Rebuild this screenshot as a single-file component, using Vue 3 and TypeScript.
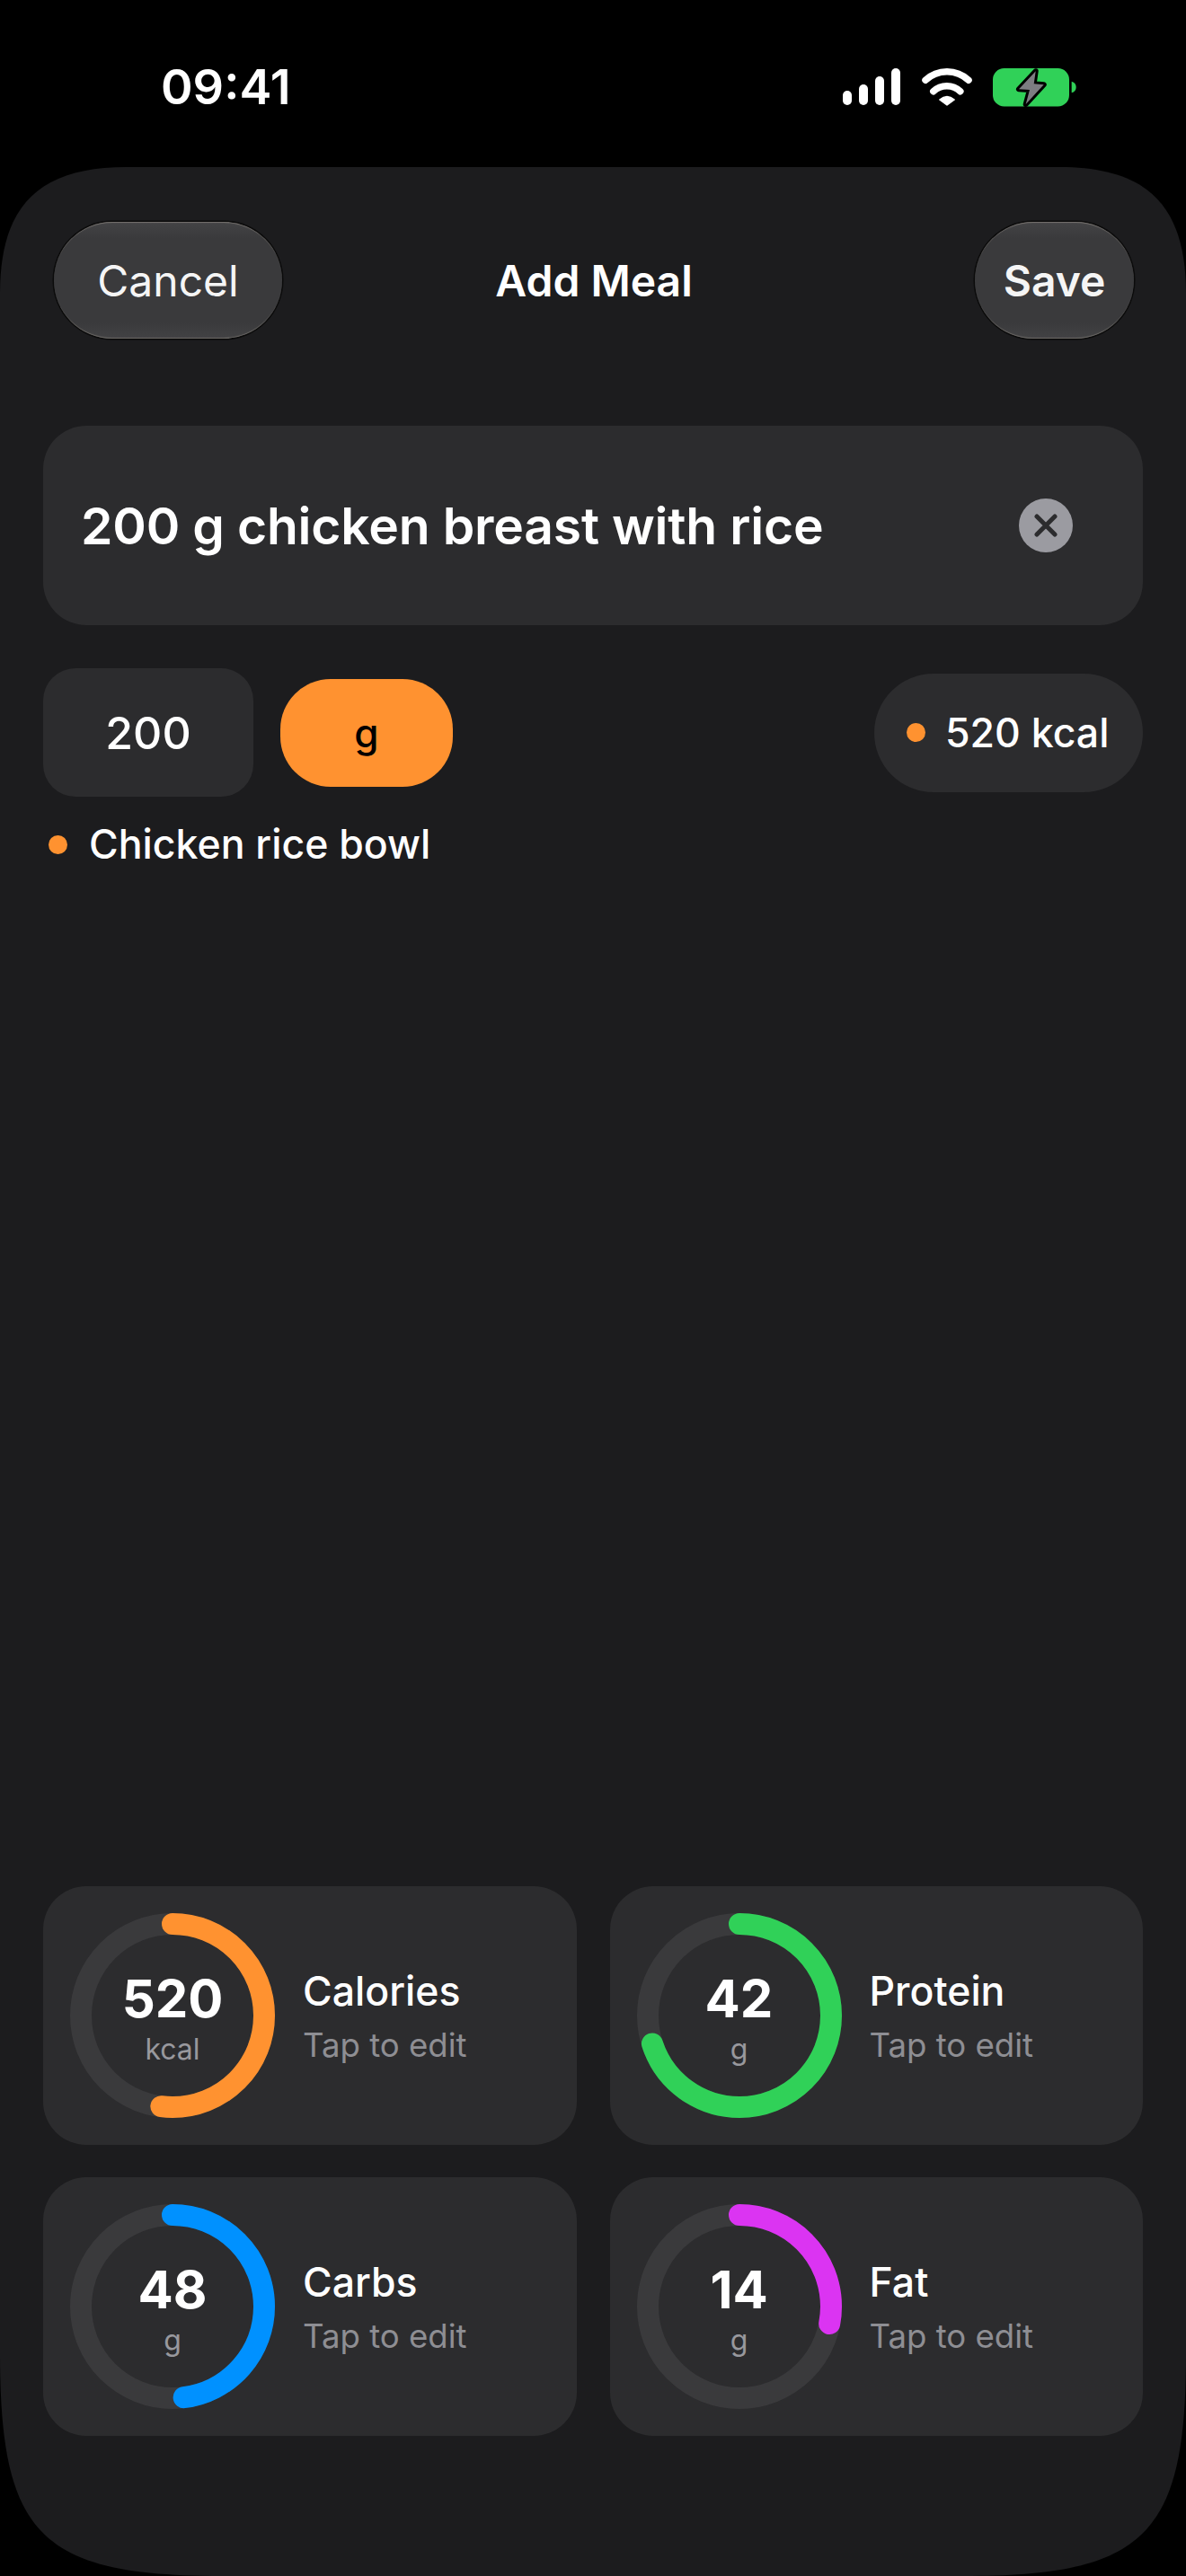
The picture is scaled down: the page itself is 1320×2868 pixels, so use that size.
<script setup lang="ts">
interface Metric {
  value: string
  unit: string
  label: string
  pct: number
  color: string
}

const metrics: Metric[] = [
  { value: '520', unit: 'kcal', label: 'Calories', pct: 52, color: '#ff9230' },
  { value: '42', unit: 'g', label: 'Protein', pct: 70, color: '#30d158' },
  { value: '48', unit: 'g', label: 'Carbs', pct: 48, color: '#0091ff' },
  { value: '14', unit: 'g', label: 'Fat', pct: 28, color: '#db34f2' }
]
</script>

<template>
  <div class="screen">
    <header class="status">
      <span class="time">09:41</span>
      <div class="status-icons">
        <div class="signal">
          <i class="bar b1"></i><i class="bar b2"></i><i class="bar b3"></i><i class="bar b4"></i>
        </div>
        <svg class="wifi" width="56" height="42" viewBox="0 0 56 42" fill="none">
          <path d="M4 13.3A35 35 0 0 1 52 13.3" stroke="#fff" stroke-width="7.5" stroke-linecap="round" />
          <path d="M12.8 25.7A21.75 21.75 0 0 1 42.8 25.7" stroke="#fff" stroke-width="7.5" stroke-linecap="round" />
          <path d="M19.8 35Q28 28 36.2 35L28 41Z" fill="#fff" stroke="#fff" stroke-width="1.5" stroke-linejoin="round" />
        </svg>
        <svg class="battery" width="93" height="43" viewBox="0 0 93 43">
          <rect x="0" y="0" width="85" height="42.5" rx="12.5" fill="#30d158" />
          <path d="M87.7 14.7C91 15.5 92.7 18 92.7 21C92.7 24 91 26.5 87.7 27.3Z" fill="#30d158" />
          <path d="M47.7 3.3L29 23.3L41 24L36.7 40L56.7 18.3L45.7 17.3Z" fill="#7d7d82" stroke="#000" stroke-width="6" stroke-linejoin="round" paint-order="stroke" />
        </svg>
      </div>
    </header>

    <main class="panel">
      <nav class="nav">
        <div class="nav-side"><button class="glass cancel">Cancel</button></div>
        <h1 class="title">Add Meal</h1>
        <div class="nav-side right"><button class="glass save">Save</button></div>
      </nav>

      <section class="field">
        <span class="field-text">200 g chicken breast with rice</span>
        <span class="clear">
          <svg width="26" height="26" viewBox="0 0 26 26" fill="none">
            <path d="M3 3L23 23M23 3L3 23" stroke="#2c2c2e" stroke-width="5" stroke-linecap="round" />
          </svg>
        </span>
      </section>

      <section class="controls">
        <div class="qty">200</div>
        <div class="unit">g</div>
        <div class="kcal"><i class="dot"></i><span>520 kcal</span></div>
      </section>

      <div class="match"><i class="dot"></i><span>Chicken rice bowl</span></div>

      <section class="grid">
        <article v-for="m in metrics" :key="m.label" class="card">
          <div class="ring">
            <svg width="228" height="228" viewBox="0 0 228 228" fill="none">
              <circle cx="114" cy="114" r="102" stroke="#3a3a3c" stroke-width="24" />
              <circle
                cx="114"
                cy="114"
                r="102"
                :stroke="m.color"
                stroke-width="24"
                stroke-linecap="round"
                pathLength="100"
                :stroke-dasharray="`${m.pct} 100`"
                transform="rotate(-90 114 114)"
              />
            </svg>
            <div class="ring-text">
              <span class="num">{{ m.value }}</span>
              <span class="num-unit">{{ m.unit }}</span>
            </div>
          </div>
          <div class="card-text">
            <span class="label">{{ m.label }}</span>
            <span class="hint">Tap to edit</span>
          </div>
        </article>
      </section>
    </main>
  </div>
</template>

<style>
html, body { margin: 0; background: #000; }
</style>

<style scoped>
.screen {
  width: 1320px;
  height: 2868px;
  display: flex;
  flex-direction: column;
  background: #000;
  font-family: Inter, "Noto Sans", sans-serif;
  color: #fff;
  overflow: hidden;
}
.status {
  height: 186px;
  flex: none;
  display: flex;
  align-items: flex-start;
  justify-content: space-between;
  padding: 0 122px 0 179px;
  box-sizing: border-box;
}
.time {
  margin-top: 64px;
  font-size: 54px;
  line-height: 66px;
  font-weight: 600;
}
.status-icons {
  margin-top: 76px;
  display: flex;
  align-items: flex-start;
}
.signal {
  display: flex;
  align-items: flex-end;
  gap: 8px;
  height: 41px;
  margin-right: 24px;
}
.bar { display: block; width: 10px; background: #fff; border-radius: 5px; }
.b1 { height: 16px; }
.b2 { height: 23px; }
.b3 { height: 32px; }
.b4 { height: 41px; }
.wifi { display: block; margin-right: 23px; }
.battery { display: block; overflow: visible; }

.panel {
  flex: 1;
  min-height: 0;
  display: flex;
  flex-direction: column;
  box-sizing: border-box;
  padding: 61px 48px 156px;
  background: #1c1c1e;
  clip-path: path("M0 141C0 43 43 0 141 0L1179 0C1277 0 1320 43 1320 141L1320 2434C1320 2637 1275 2682 1072 2682L248 2682C45 2682 0 2637 0 2434Z");
}
.nav {
  display: grid;
  grid-template-columns: 1fr auto 1fr;
  align-items: center;
  margin: 0 10px 0 12px;
}
.nav-side { display: flex; }
.nav-side.right { justify-content: flex-end; }
.glass {
  height: 130px;
  border-radius: 65px;
  border: 0;
  padding: 0;
  font-family: inherit;
  font-size: 48px;
  color: #f5f5f5;
  background: linear-gradient(#444446 0, #3a3a3c 14%, #3a3a3c 86%, #424244 100%);
  box-shadow:
    0 0 0 1.5px #0b0b0b,
    inset 0 2px 1px -1px #77736f,
    inset 0 -2px 1px -1px #6f6c68;
}
.cancel { width: 254px; font-weight: 400; }
.save { width: 177px; font-weight: 600; }
.title {
  margin: 0;
  font-size: 48px;
  font-weight: 600;
}
.field {
  margin-top: 97px;
  height: 222px;
  flex: none;
  display: flex;
  align-items: center;
  justify-content: space-between;
  padding: 0 78px 0 42px;
  background: #2c2c2e;
  border-radius: 48px;
}
.field-text { font-size: 57px; font-weight: 600; letter-spacing: -0.2px; }
.clear {
  width: 60px;
  height: 60px;
  border-radius: 50%;
  background: #9b9ba1;
  display: flex;
  align-items: center;
  justify-content: center;
}
.clear svg { display: block; }
.controls {
  margin-top: 48px;
  height: 143px;
  flex: none;
  display: flex;
  align-items: center;
}
.qty {
  width: 234px;
  height: 143px;
  display: flex;
  align-items: center;
  justify-content: center;
  background: #2c2c2e;
  border-radius: 36px;
  font-size: 50px;
  font-weight: 500;
}
.unit {
  margin-left: 30px;
  width: 192px;
  height: 120px;
  display: flex;
  align-items: center;
  justify-content: center;
  background: #ff9230;
  border-radius: 56px;
  color: #000;
  font-size: 44px;
  font-weight: 500;
}
.kcal {
  margin-left: auto;
  width: 299px;
  height: 132px;
  box-sizing: border-box;
  padding-left: 36px;
  display: flex;
  align-items: center;
  gap: 22px;
  background: #2c2c2e;
  border-radius: 66px;
  font-size: 44.6px;
  font-weight: 500;
}
.dot {
  display: block;
  flex: none;
  width: 21px;
  height: 21px;
  border-radius: 50%;
  background: #ff9230;
}
.match {
  margin-top: 25px;
  padding-left: 6px;
  display: flex;
  align-items: center;
  gap: 24px;
  font-size: 44.6px;
  line-height: 56px;
  font-weight: 500;
}
.grid {
  margin-top: auto;
  display: grid;
  grid-template-columns: 1fr 1fr;
  gap: 36px 37px;
}
.card {
  height: 288px;
  box-sizing: border-box;
  padding: 0 30px;
  display: flex;
  align-items: center;
  gap: 31px;
  background: #2c2c2e;
  border-radius: 48px;
}
.ring {
  position: relative;
  width: 228px;
  height: 228px;
  flex: none;
}
.ring svg { display: block; }
.ring-text {
  position: absolute;
  inset: 0;
  box-sizing: border-box;
  padding-top: 8px;
  display: flex;
  flex-direction: column;
  align-items: center;
  justify-content: center;
  gap: 7px;
}
.num { font-size: 58px; line-height: 60px; font-weight: 700; }
.num-unit { font-size: 32px; line-height: 40px; color: #98989d; }
.card-text {
  display: flex;
  flex-direction: column;
  gap: 10px;
  padding-top: 2px;
}
.label { font-size: 44.6px; line-height: 54px; font-weight: 500; }
.hint { font-size: 36.6px; line-height: 46px; color: #8e8e93; }
</style>
